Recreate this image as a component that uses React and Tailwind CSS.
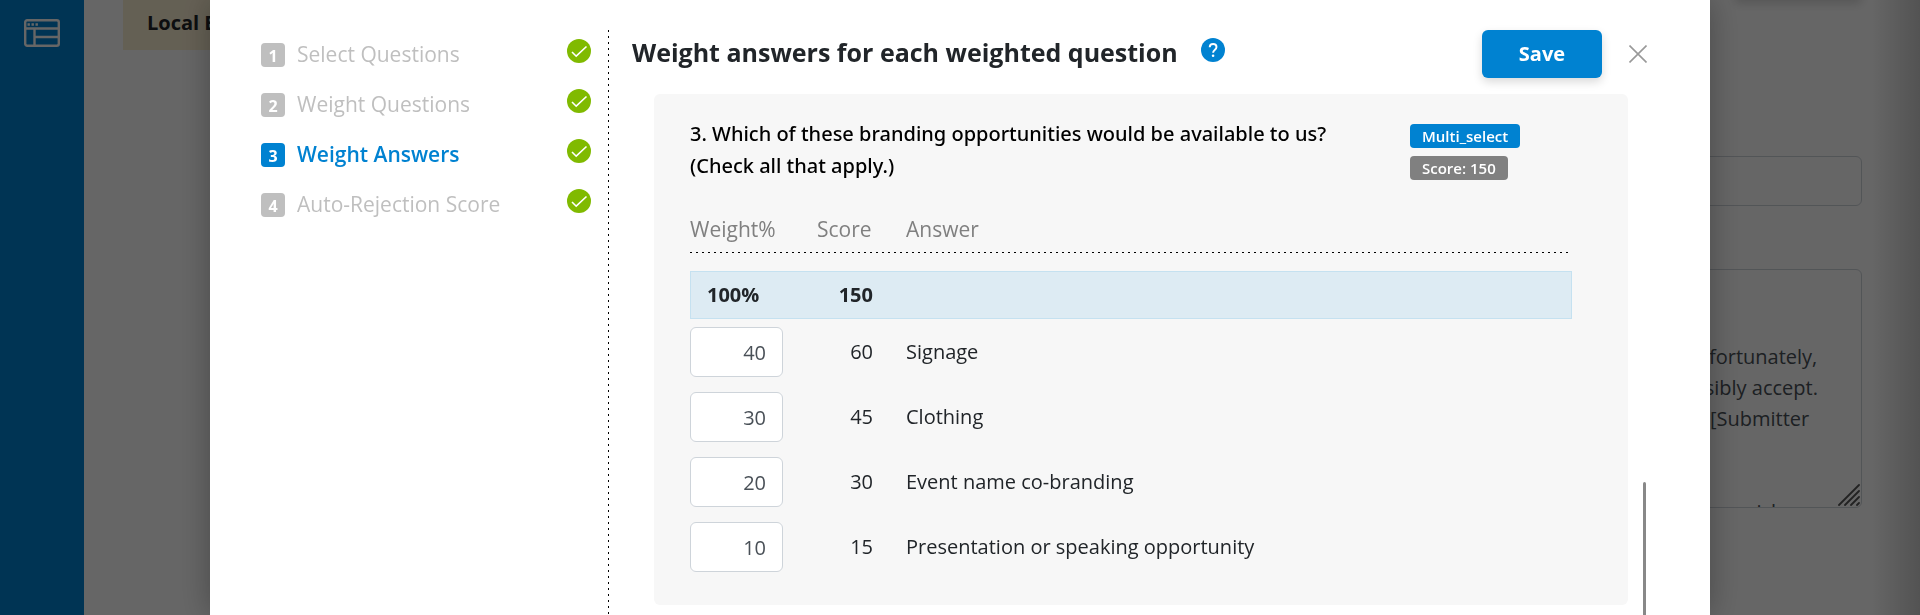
import { useState } from "react";

const steps = [
  { number: 1, label: "Select Questions" },
  { number: 2, label: "Weight Questions" },
  { number: 3, label: "Weight Answers" },
  { number: 4, label: "Auto-Rejection Score" },
];

const initialAnswers = [
  { label: "Signage", weight: 40 },
  { label: "Clothing", weight: 30 },
  { label: "Event name co-branding", weight: 20 },
  { label: "Presentation or speaking opportunity", weight: 10 },
];

const TOTAL_SCORE = 150;

const declineMessage = `Hello,

Thank you. Unfortunately,
as we can possibly accept.
Warm wishes, [Submitter


and with that, we wish`;

function PanelIcon() {
  return (
    <svg width="36" height="28" viewBox="0 0 36 28" fill="none" stroke="white" strokeWidth="2.4" aria-hidden="true">
      <rect x="1.2" y="1.2" width="33.6" height="25.6" rx="2" />
      <path d="M1 9.500h34M10.500 10v17M11 18h24" />
      <path d="M3.500 5.500h2.400M7.500 5.500h2.400M11.500 5.500h2.400" />
    </svg>
  );
}

function CheckIcon() {
  return (
    <svg className="shrink-0 self-start" width="24" height="24" viewBox="0 0 24 24" fill="none" aria-label="Completed" role="img">
      <circle cx="12" cy="12" r="12" fill="#80ba00" />
      <path d="M5 13l4.2 4.2L19.5 7.5" stroke="white" strokeWidth="1.6" />
    </svg>
  );
}

function HelpIcon() {
  return (
    <svg width="24" height="24" viewBox="0 0 24 24" fill="none" aria-hidden="true">
      <circle cx="12" cy="12" r="12" fill="#0082d1" />
      <path d="M8.7 9.3C8.7 7.3 10 6 12.1 6s3.4 1.2 3.4 3c0 1.500-.8 2.200-1.800 3-1 .8-1.600 1.400-1.600 2.800" stroke="white" strokeWidth="1.9" />
      <circle cx="12.1" cy="17.7" r="1.3" fill="white" />
    </svg>
  );
}

function CloseIcon() {
  return (
    <svg width="18" height="18" viewBox="0 0 18 18" stroke="#999999" strokeWidth="1.6" aria-hidden="true">
      <path d="M.5.5l17 17M17.5.5l-17 17" />
    </svg>
  );
}

function ResizeGrip() {
  return (
    <svg
      className="absolute right-0.5 bottom-0.5 pointer-events-none"
      width="22"
      height="22"
      viewBox="0 0 22 22"
      stroke="#555555"
      strokeWidth="1.8"
      strokeLinecap="round"
      aria-hidden="true"
    >
      <path d="M1 21L21 1M7 21L21 7M13 21l8-8M19 21l2-2" />
    </svg>
  );
}

// The page that stays visible behind the dialog
function BackgroundPage() {
  return (
    <div className="flex min-h-screen bg-white">
      <nav className="w-21 shrink-0 bg-[#0082d1] pt-[19px]">
        <a href="#dashboard" aria-label="Dashboard" className="flex justify-center">
          <PanelIcon />
        </a>
      </nav>

      <main className="flex-1 flex flex-col overflow-hidden pl-[39px]">
        <div className="flex justify-between pr-[58px]">
          <div className="w-[480px] h-[50px] bg-[#fbf0d3] px-6 flex items-center pb-1">
            <span className="font-bold">Local Events</span>
          </div>
          <button
            type="button"
            aria-label="Edit"
            className="w-32 h-12 -mt-12 rounded-md bg-[#0082d1] shadow-[0_4px_10px_rgba(0,0,0,0.15)]"
          />
        </div>

        <form className="self-end w-[300px] mr-[58px] mt-[106px]">
          <input
            type="text"
            aria-label="Subject"
            className="block w-full h-[50px] rounded-md border border-[#ced4da] px-3"
          />
          <div className="relative mt-[63px]">
            <textarea
              aria-label="Message"
              defaultValue={declineMessage}
              className="block w-full h-[239px] resize-none overflow-hidden rounded-md border border-[#ced4da] px-3 py-[9px] leading-[31px] text-[#495057] whitespace-pre"
            />
            <ResizeGrip />
          </div>
        </form>
      </main>

      <div className="w-12 shrink-0 -ml-12 bg-linear-to-r from-white to-[#cfcfcf]" />
    </div>
  );
}

function StepList({ current }) {
  return (
    <ol className="w-[398px] shrink-0 pl-[51px] pr-[17px] pt-[9px]">
      {steps.map((step) => {
        const active = step.number === current;
        return (
          <li key={step.number} className="flex items-center h-8 mb-[18px]">
            <span
              className={`w-6 h-6 rounded-sm text-center text-base leading-[26px] font-bold text-white ${
                active ? "bg-[#0082d1]" : "bg-[#bfbfbf]"
              }`}
            >
              {step.number}
            </span>
            <a
              href={`#step-${step.number}`}
              className={`flex-1 ml-3 text-[21px] ${active ? "font-semibold text-[#0082d1]" : "text-[#bfbfbf]"}`}
            >
              {step.label}
            </a>
            <CheckIcon />
          </li>
        );
      })}
    </ol>
  );
}

function QuestionCard() {
  const [answers, setAnswers] = useState(initialAnswers);
  const totalWeight = answers.reduce((sum, answer) => sum + Number(answer.weight), 0);

  const handleWeightChange = (index, value) => {
    setAnswers(answers.map((answer, i) => (i === index ? { ...answer, weight: value } : answer)));
  };

  return (
    <section className="rounded-md bg-[#f7f7f7] pt-6 pb-[26px] pl-9 pr-14">
      <div className="flex">
        <h2 className="flex-1 pr-6 font-['Noto_Sans'] font-medium leading-8 text-black">
          3. Which of these branding opportunities would be available to us? (Check all that apply.)
        </h2>
        <div className="w-[162px] shrink-0 flex flex-col items-start gap-2 pt-1.5 text-[15px] leading-6 font-semibold text-white">
          <span className="rounded-sm bg-[#0082d1] px-3">Multi_select</span>
          <span className="rounded-sm bg-[#808080] px-3">Score: 150</span>
        </div>
      </div>

      <table className="w-full table-fixed mt-[31px]">
        <colgroup>
          <col className="w-[127px]" />
          <col className="w-[89px]" />
          <col />
        </colgroup>
        <thead className="text-left text-[21px] leading-8 text-[#808080] bg-[linear-gradient(to_right,black_2px,transparent_2px)] bg-size-[6px_1px] bg-bottom bg-repeat-x">
          <tr>
            <th className="font-normal pb-2">Weight%</th>
            <th className="font-normal pb-2">Score</th>
            <th className="font-normal pb-2">Answer</th>
          </tr>
        </thead>
        <tbody className="before:block before:h-[18px]">
          <tr className="h-12 bg-[#ddebf3] font-bold outline outline-[#c5e1f0] -outline-offset-1">
            <td className="pl-[17px]">{totalWeight}%</td>
            <td className="text-right pr-[33px]">{TOTAL_SCORE}</td>
            <td />
          </tr>
          {answers.map((answer, index) => (
            <tr key={answer.label}>
              <td className="pt-2 pb-[7px]">
                <input
                  type="text"
                  inputMode="numeric"
                  id={`weight-${index}`}
                  value={answer.weight}
                  onChange={(e) => handleWeightChange(index, e.target.value)}
                  className="block w-[93px] h-[50px] rounded-md border border-[#ced4da] bg-white px-4 text-right text-[#495057]"
                />
              </td>
              <td className="text-right pr-[33px]">{(answer.weight * TOTAL_SCORE) / 100}</td>
              <td>
                <label htmlFor={`weight-${index}`}>{answer.label}</label>
              </td>
            </tr>
          ))}
        </tbody>
      </table>
    </section>
  );
}

function App() {
  return (
    <div className="h-screen overflow-hidden font-['Open_Sans',sans-serif] text-xl text-[#212529]">
      <BackgroundPage />

      {/* Dialog */}
      <div className="fixed inset-0 bg-black/60">
        <div
          role="dialog"
          aria-labelledby="dialog-title"
          className="relative flex h-full max-w-[1500px] mx-auto overflow-hidden bg-white pt-[30px] shadow-[0_0_30px_rgba(0,0,0,0.3)]"
        >
          <StepList current={3} />
          <div className="w-px shrink-0 bg-[linear-gradient(to_bottom,black_2px,transparent_2px)] bg-size-[1px_6px]" />

          <div className="flex-1 pl-[23px]">
            <header className="flex items-center h-12 pr-[63px]">
              <h1 id="dialog-title" className="text-[25px] leading-[44px] font-bold self-start">
                Weight answers for each weighted question
              </h1>
              <button type="button" aria-label="Help" className="ml-[23px] mt-2 self-start">
                <HelpIcon />
              </button>
              <button
                type="button"
                className="ml-auto w-[120px] h-12 rounded-md bg-[#0082d1] font-bold text-white shadow-[0_4px_10px_rgba(0,0,0,0.15)]"
              >
                Save
              </button>
              <button type="button" aria-label="Close" className="ml-[27px]">
                <CloseIcon />
              </button>
            </header>

            <div className="mt-4 ml-[22px] mr-[82px]">
              <QuestionCard />
            </div>
          </div>

          {/* Scroll thumb */}
          <div className="absolute right-16 bottom-0 w-[3px] h-[133px] rounded-t-sm bg-[#888888]" />
        </div>
      </div>
    </div>
  );
}

export default App;
